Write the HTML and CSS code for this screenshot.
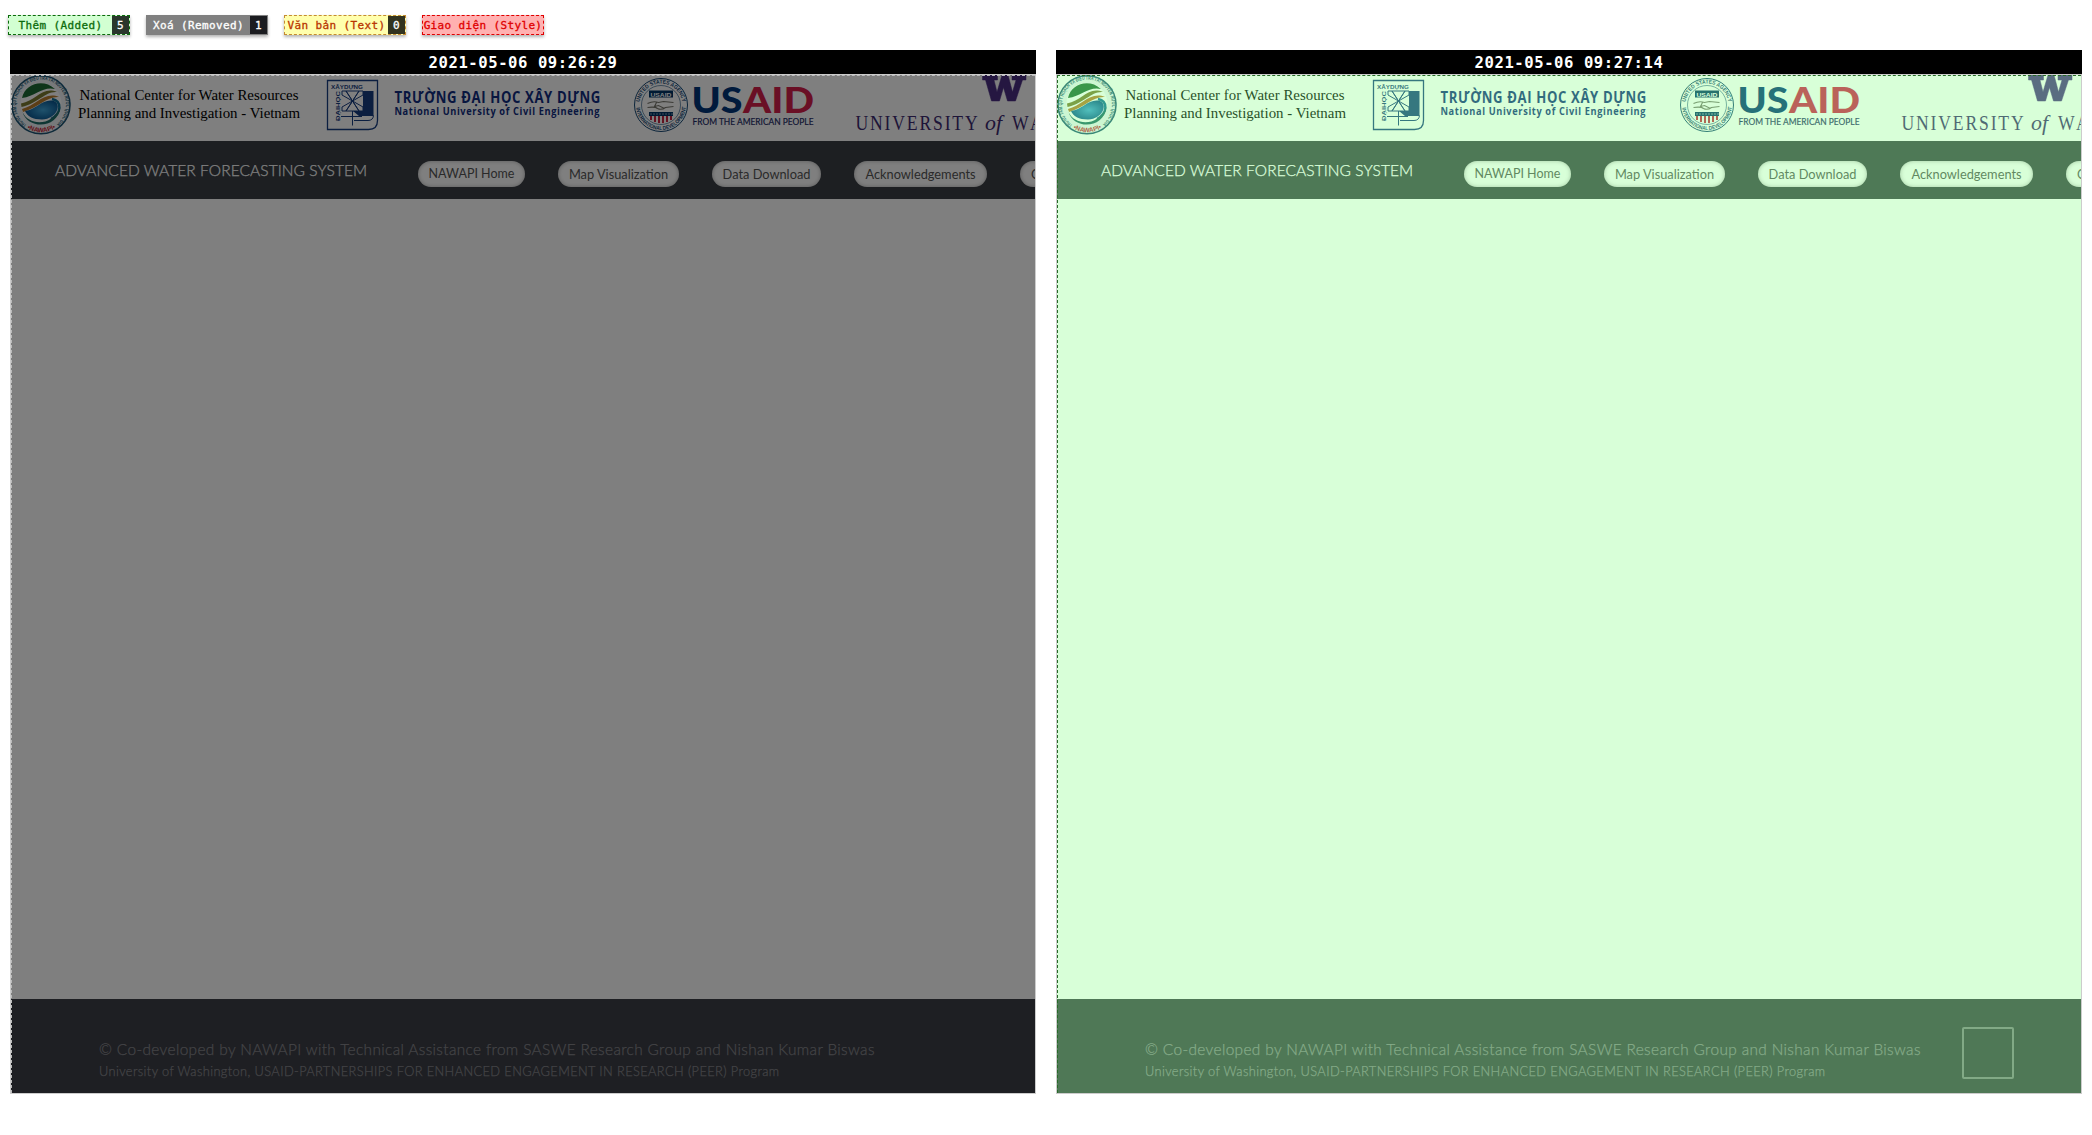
FILE: index.html
```html
<!DOCTYPE html>
<html lang="vi">
<head>
<meta charset="utf-8">
<title>Page comparison</title>
<link rel="stylesheet" href="styles.css">
</head>
<body>
<svg class="sprite" aria-hidden="true">
  <defs>
    <path id="ring-full" d="M15.500 50A25 25 0 1 1 44.500 50"/>
    <path id="ring-low" d="M16 53.500Q30 61 44 53.500"/>
    <path id="seal-top" d="M6 27.500a21.500 21.500 0 0 1 43 0"/>
    <path id="seal-low" d="M2.500 27.500a25 25 0 0 0 50 0"/>
    <radialGradient id="sea" cx=".55" cy=".5" r=".6"><stop offset="0" stop-color="#3fa4d8"/><stop offset="1" stop-color="#05508c"/></radialGradient>
  </defs>
  <symbol id="partners" viewBox="0 0 1024 66">
    <g>
      <circle cx="30" cy="29.800" r="29" fill="#eef3f6" stroke="#1d5474" stroke-width="1.500"/>
      <text class="ring-text"><textPath href="#ring-full" textLength="124" lengthAdjust="spacingAndGlyphs">TRUNG TÂM QUY HOẠCH VÀ ĐIỀU TRA TÀI NGUYÊN NƯỚC QUỐC GIA</textPath></text>
      <text class="nawapi"><textPath href="#ring-low" textLength="30" lengthAdjust="spacingAndGlyphs">•NAWAPI•</textPath></text>
      <circle cx="30" cy="28.500" r="20.500" fill="#fff"/>
      <path d="M11 23C14 9 32 3 44 14C32 11 25 21 11 23Z" fill="#1d6b34"/>
      <path d="M10 28.500C25 26 31 11 46 17C34 16 28 28 10.500 32Z" fill="#7a7a30"/>
      <path d="M11 34C25 31 33 16 48 22C36 21 28 32 12 37Z" fill="#b87c2c"/>
      <path d="M14 36C25 35 32 23 43 26C51 29 46 44 31 44.500C22 44.500 16 41 14 36Z" fill="url(#sea)"/>
      <path d="M41 24C51 26 51 38 40 44" fill="none" stroke="#0f6f98" stroke-width="2.500"/>
      <path d="M11.500 37C18 51 41 52 49.500 32C47 54 17 55 11.500 37Z" fill="#1d6c66"/>
    </g>
    <text class="serif" x="68.500" y="25" textLength="219" lengthAdjust="spacingAndGlyphs">National Center for Water Resources</text>
    <text class="serif" x="67" y="43" textLength="222" lengthAdjust="spacingAndGlyphs">Planning and Investigation - Vietnam</text>
    <g fill="none" stroke="#173d80">
      <path d="M316.500 5.500h50v40q0 9-9 9h-41Z" stroke-width="1.300"/>
      <path fill="#173d80" stroke="none" d="M352 16h10.500v25H348l-6-5h10Z"/>
      <path d="M330 41.500h21M341.500 36v14.500M343 45.500h14q5 0 5.500-5"/>
      <path d="M331 20v-4h4L341.500 26 331 20ZM352 20v-4h-4L341.500 26 352 20ZM331 32v4h4L341.500 26 331 32ZM352 32v4h-4L341.500 26 352 32ZM341.500 26L335 16h13ZM341.500 26L335 36h13Z"/>
    </g>
    <text class="uni-small" x="320" y="14" textLength="32" lengthAdjust="spacingAndGlyphs">XÂYDỰNG</text>
    <text class="uni-small" transform="translate(328.500 46) rotate(-90)" textLength="30" lengthAdjust="spacingAndGlyphs">ĐẠIHỌC</text>
    <text class="uni" transform="translate(383.500 27.500) scale(.82 1)" textLength="251" lengthAdjust="spacing">TRƯỜNG ĐẠI HỌC XÂY DỰNG</text>
    <text class="uni-en" transform="translate(383.500 40) scale(.88 1)" textLength="233" lengthAdjust="spacing">National University of Civil Engineering</text>
    <g transform="translate(622.500 2.500)">
      <circle cx="27.500" cy="27.500" r="26.500" fill="#fff" stroke="#164875" stroke-width="1"/>
      <circle cx="27.500" cy="27.500" r="19.500" fill="#fff" stroke="#164875" stroke-width=".6"/>
      <text class="seal"><textPath href="#seal-top" startOffset="3" textLength="61" lengthAdjust="spacingAndGlyphs">UNITED STATES AGENCY</textPath></text>
      <text class="seal"><textPath href="#seal-low" startOffset="3" textLength="73" lengthAdjust="spacingAndGlyphs">INTERNATIONAL DEVELOPMENT</textPath></text>
      <path d="M15.500 13h24v7h-24Z" fill="#003466"/>
      <text class="seal-name" x="17" y="19" textLength="21" lengthAdjust="spacingAndGlyphs">USAID</text>
      <path d="M14 26q6-3 11-1l5-1 10 1M14 30q8-1 10 1 4 2 8-1l8-1M23 25l-2 4 4-1 6 3" fill="none" stroke="#77766d" stroke-width="1.100"/>
      <path d="M15.500 34.500h24v4h-24Z" fill="#003466"/>
      <path d="M17.500 38.500v4M21.500 38.500v6M25.500 38.500v7M29.500 38.500v7M33.500 38.500v6M37.500 38.500v4" stroke="#c52742" stroke-width="2"/>
      <path d="M17 36.500h22" stroke="#fff" stroke-width="1" stroke-dasharray="1 2"/>
    </g>
    <text class="usaid navy" x="680.500" y="38" textLength="51" lengthAdjust="spacingAndGlyphs">US</text>
    <text class="usaid red" x="732" y="38" textLength="71" lengthAdjust="spacingAndGlyphs">AID</text>
    <text class="people" x="681.500" y="49.500" textLength="121" lengthAdjust="spacingAndGlyphs">FROM THE AMERICAN PEOPLE</text>
    <path fill="#4b2e83" stroke="#4b2e83" stroke-width=".5" d="M971.500 0h15v5h-3.500l3 12 5-17h6l4.500 17 3.500-12h-4V0h14v5h-3.500l-7 21h-8l-4-13.500-4 13.500h-8l-6-21h-3Z"/>
    <text class="uw" transform="translate(844.500 55) scale(.82 1)" textLength="149" lengthAdjust="spacing">UNIVERSITY</text>
    <text class="uw of" x="974" y="55" textLength="17" lengthAdjust="spacingAndGlyphs">of</text>
    <text class="uw" transform="translate(1001 55) scale(.82 1)" textLength="180" lengthAdjust="spacing">WASHINGTON</text>
  </symbol>
</svg>

<div class="legend">
  <span class="tag added"><b>Thêm (Added)</b><i>5</i></span>
  <span class="tag removed"><b>Xoá (Removed)</b><i>1</i></span>
  <span class="tag text"><b>Văn bản (Text)</b><i>0</i></span>
  <span class="tag style"><b>Giao diện (Style)</b></span>
</div>

<main class="compare">
  <section class="version before">
    <h2>2021-05-06 09:26:29</h2>
    <div class="page">
      <svg class="partners"><use href="#partners"/></svg>
      <nav>
        <strong>ADVANCED WATER FORECASTING SYSTEM</strong>
        <a class="home">NAWAPI Home</a><a class="map">Map Visualization</a><a class="data">Data Download</a><a class="ack">Acknowledgements</a><a class="contact">Contact</a>
      </nav>
      <div class="content"></div>
      <footer>
        <p class="credit">© Co-developed by NAWAPI with Technical Assistance from SASWE Research Group and Nishan Kumar Biswas</p>
        <p class="program">University of Washington, USAID-PARTNERSHIPS FOR ENHANCED ENGAGEMENT IN RESEARCH (PEER) Program</p>
      </footer>
      <div class="overlay"></div>
    </div>
  </section>
  <section class="version after">
    <h2>2021-05-06 09:27:14</h2>
    <div class="page">
      <svg class="partners"><use href="#partners"/></svg>
      <nav>
        <strong>ADVANCED WATER FORECASTING SYSTEM</strong>
        <a class="home">NAWAPI Home</a><a class="map">Map Visualization</a><a class="data">Data Download</a><a class="ack">Acknowledgements</a><a class="contact">Contact</a>
      </nav>
      <div class="content"></div>
      <footer>
        <p class="credit">© Co-developed by NAWAPI with Technical Assistance from SASWE Research Group and Nishan Kumar Biswas</p>
        <p class="program">University of Washington, USAID-PARTNERSHIPS FOR ENHANCED ENGAGEMENT IN RESEARCH (PEER) Program</p>
        <span class="to-top"></span>
      </footer>
      <div class="overlay"></div>
    </div>
  </section>
</main>
</body>
</html>
```
FILE: styles.css
```css
* { box-sizing: border-box; }
body { margin: 0; background: #fff; overflow: hidden; font-family: Lato, sans-serif; }
.sprite { position: absolute; width: 0; height: 0; }

.legend { display: flex; gap: 16px; padding: 15px 0 0 8px; height: 50px; }
.tag {
  display: flex; flex: none; width: 122px; height: 20px; border: 1px dashed;
  font: 11px/19px "DejaVu Sans Mono", monospace; letter-spacing: .36px;
  box-shadow: 0 2px 3px rgba(0,0,0,.3); white-space: nowrap;
}
.tag b { flex: 1; display: flex; justify-content: center; font-weight: 400; -webkit-text-stroke: .3px; }
.tag i { width: 17px; font-style: normal; color: #fff; text-align: center; background: #2a362c; -webkit-text-stroke: .3px; }
.added { color: #0b6b0b; background: #d2ffd2; }
.removed { color: #fff; background: #808080; border-color: #808080; }
.removed i { background: #1b1c20; }
.text { color: #b83400; background: #ffffad; border-color: #c58b31; }
.text i { background: #32331f; }
.style { color: #e00000; background: #ffb0b0; }

.compare { display: flex; gap: 20px; padding-left: 10px; }
.version { width: 1026px; }
.version h2 {
  margin: 0; height: 24px; background: #000; color: #fff; text-align: center;
  font: bold 15.6px/26px "DejaVu Sans Mono", monospace; letter-spacing: .55px;
}
.page { position: relative; height: 1020px; border: 1px solid #ccc; overflow: hidden; }
.partners { display: block; width: 1024px; height: 66px; }

nav {
  display: flex; align-items: center; height: 58px; padding-left: 44px; background: #3a3f45;
  color: #fff; white-space: nowrap;
}
nav strong { flex: none; width: 363px; font-size: 15.5px; font-weight: 300; line-height: 58px; letter-spacing: .08px; -webkit-text-stroke: .25px; }
nav a {
  flex: none; height: 26px; margin-top: 7px; border-radius: 13px; background: #fff; color: #555;
  font-size: 12.8px; line-height: 26px; text-align: center;
  box-shadow: inset 0 0 4px rgba(0,0,0,.3);
}
.home { width: 107px; margin-right: 33px; font-size: 12.5px; }
.map { width: 121px; margin-right: 33px; }
.data { width: 109px; margin-right: 33px; }
.ack { width: 133px; margin-right: 33px; }
.contact { width: 82px; padding-left: 11px; text-align: left; }
.content { height: 800px; }

footer { position: relative; height: 94px; padding: 39px 0 0 88px; background: #3c3e46; color: #88888d; white-space: nowrap; }
footer p { margin: 0; font-weight: 300; line-height: 22px; -webkit-text-stroke: .25px; }
.credit { font-size: 15.4px; letter-spacing: .365px; }
.program { font-size: 12.8px; letter-spacing: .395px; }
.to-top { position: absolute; left: 905px; top: 28px; width: 52px; height: 52px; border: 2px solid #85868a; border-radius: 2px; }

.overlay { position: absolute; inset: 0; border-top: 1px dashed; border-left: 1px dashed; }
.before .overlay { background: rgba(0,0,0,.5); border-color: #bbb; }
.after .overlay { background: rgba(125,255,125,.3); border-color: #286b28; }

.ring-text { font: bold 5.5px "Liberation Sans", sans-serif; fill: #245b76; }
.nawapi { font: bold 6.5px "Liberation Sans", sans-serif; fill: #c51f35; }
.serif { font: 15px "Liberation Serif", serif; fill: #000; }
.uni { font: bold 16px "Open Sans", sans-serif; fill: #102c80; }
.uni-en { font: bold 10.5px "Open Sans", sans-serif; fill: #102c80; }
.uni-small { font: bold 6px "Liberation Sans", sans-serif; fill: #173d80; }
.seal { font: bold 5.5px "Liberation Sans", sans-serif; fill: #164875; }
.seal-name { font: bold 6px "Liberation Sans", sans-serif; fill: #fff; }
.usaid { font: 900 35.5px Lato, sans-serif; }
.navy { fill: #003478; }
.red { fill: #d51f4b; }
.people { font: 9.5px Lato, sans-serif; fill: #1d2b66; stroke: #1d2b66; stroke-width: .2px; }
.uw { font: 21.5px "Liberation Serif", serif; fill: #3d2a70; }
.of { font-style: italic; }
```
